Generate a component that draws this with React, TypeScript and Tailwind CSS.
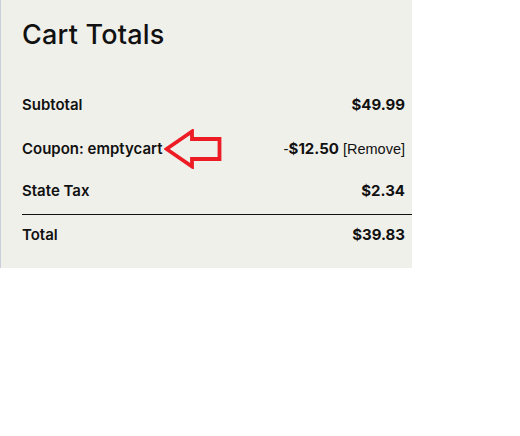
import React from "react";

const Arrow = () => (
  <svg width="58" height="40" viewBox="0 0 58 40" className="ml-[1px] -my-[6px]" aria-hidden>
    <path
      d="M2.5 20 L28 2.5 L28 10 L55.5 10 L55.5 30 L28 30 L28 37.5 Z"
      fill="none"
      stroke="#ed1c24"
      strokeWidth="3.8"
      strokeLinejoin="miter"
    />
  </svg>
);

const mono = { fontFamily: "'Liberation Sans', Arial, sans-serif" };

export default function App() {
  return (
    <div className="w-[520px] h-[436px] bg-white">
      <div
        className="w-[412px] h-[268px] bg-[#f0f0eb] border-l border-[#c9d0dc] pl-[21px] pt-[18px] text-[#111]"
        style={{ fontFamily: "Inter, 'Noto Sans', sans-serif" }}
      >
        <h2 className="text-[27px] font-medium leading-[34px] tracking-[0.2px]">Cart Totals</h2>
        <div className="mt-[39px] flex items-center justify-between pr-[7px] h-[28px] text-[15px] font-semibold">
          <span>Subtotal</span>
          <span className="font-bold">$49.99</span>
        </div>
        <div className="mt-[16px] flex items-center justify-between pr-[7px] h-[28px] text-[15px] font-semibold">
          <span className="flex items-center">
            Coupon: emptycart
            <Arrow />
          </span>
          <span className="flex items-baseline">
            <span className="font-normal" style={mono}>-</span>
            <span className="font-bold">$12.50</span>
            <span className="ml-[4px] font-normal text-[14.5px]" style={mono}>
              [Remove]
            </span>
          </span>
        </div>
        <div className="mt-[14px] flex items-center justify-between pr-[7px] h-[28px] text-[15px] font-semibold">
          <span>State Tax</span>
          <span className="font-bold">$2.34</span>
        </div>
        <div className="mt-[9px] border-t border-[#111]" />
        <div className="mt-[6px] flex items-center justify-between pr-[7px] h-[28px] text-[15px] font-semibold">
          <span>Total</span>
          <span className="font-bold">$39.83</span>
        </div>
      </div>
    </div>
  );
}
